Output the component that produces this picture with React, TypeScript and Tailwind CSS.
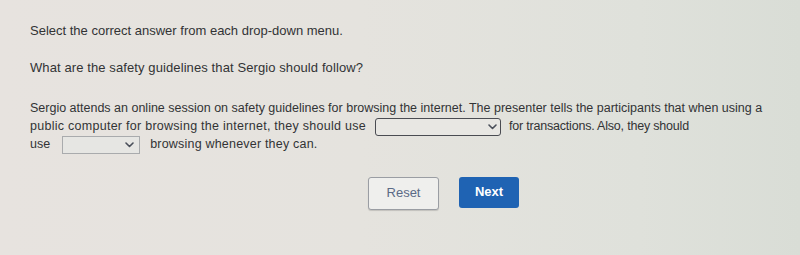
import React from "react";

function Chevron() {
  return (
    <svg width="9" height="6" viewBox="0 0 9 6" className="shrink-0">
      <path d="M1 1 L4.5 4.5 L8 1" fill="none" stroke="#4a4f5a" strokeWidth="1.6" strokeLinecap="round" strokeLinejoin="round" />
    </svg>
  );
}

export default function App() {
  return (
    <div
      className="w-[800px] h-[255px] overflow-hidden text-[#323335] bg-[linear-gradient(90deg,#e7e3df_0%,#e5e3de_45%,#dfe1db_80%,#d9ddd6_100%)]"
      style={{ fontFamily: '"Liberation Sans", Arial, sans-serif' }}
    >
      <div className="pl-[30px] pt-[22px]">
        <p className="text-[13px] leading-[18px]">Select the correct answer from each drop-down menu.</p>
        <p className="text-[13px] leading-[18px] mt-[19px] tracking-[0.1px]">What are the safety guidelines that Sergio should follow?</p>
        <div className="mt-[23px] text-[12.5px] leading-[17.5px]">
          <div>
            Sergio attends an online session on safety guidelines for browsing the internet. The presenter tells the participants that when using a
          </div>
          <div className="flex items-center">
            <span className="tracking-[0.27px]">public computer for browsing the internet, they should use</span>
            <span className="ml-[9px] mr-[8px] inline-flex items-center justify-end w-[126px] h-[18px] border-[1.5px] border-[#4a4c52] rounded-[3px] bg-[#e8e7e3] pr-[3px]">
              <Chevron />
            </span>
            <span className="tracking-[-0.2px]">for transactions. Also, they should</span>
          </div>
          <div className="flex items-center">
            <span>use</span>
            <span className="ml-[12px] mr-[10px] inline-flex items-center justify-end w-[78px] h-[18px] border border-[#a9abad] bg-[#e6e6e3] pr-[5px]">
              <Chevron />
            </span>
            <span className="tracking-[0.2px]">browsing whenever they can.</span>
          </div>
        </div>
        <div className="flex gap-[20px] mt-[23px] pl-[338px]">
          <button className="w-[71px] h-[33px] border border-[#9a9da3] rounded-[3px] bg-[#efefed] text-[#5b6a86] text-[13px] shadow-[0_1px_1px_rgba(0,0,0,0.15)]">
            Reset
          </button>
          <button className="w-[60px] h-[31px] rounded-[3px] bg-[#1f63b3] text-white font-bold text-[13px]">
            Next
          </button>
        </div>
      </div>
    </div>
  );
}
